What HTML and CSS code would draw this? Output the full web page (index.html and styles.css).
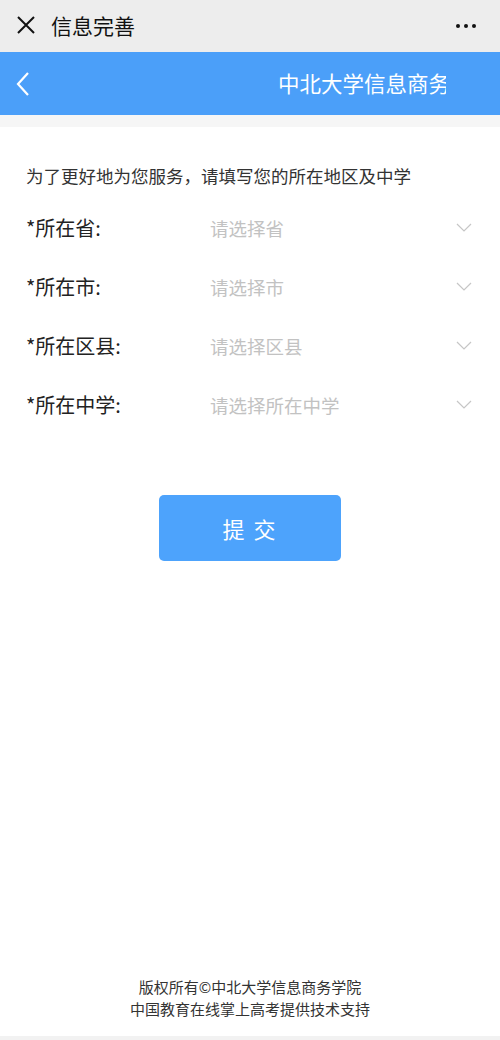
FILE: index.html
```html
<!DOCTYPE html>
<html lang="zh-CN">
<head>
    <meta charset="UTF-8">
    <meta name="viewport" content="width=device-width, initial-scale=1.0">
    <title>信息完善</title>
    <link rel="stylesheet" href="styles.css">
</head>
<body>
    <div class="page">
        <div class="topbar">
            <svg class="close" width="20" height="20" viewBox="0 0 20 20">
                <path d="M2 2 L18 18 M18 2 L2 18" stroke="#111" stroke-width="2" fill="none"/>
            </svg>
            <span class="topbar-title">信息完善</span>
            <span class="more"><i></i><i></i><i></i></span>
        </div>

        <div class="navbar">
            <svg class="back" width="16" height="26" viewBox="0 0 16 26">
                <path d="M13 2 L3 13 L13 24" stroke="#fff" stroke-width="2.2" fill="none"/>
            </svg>
            <div class="nav-title">中北大学信息商务学院</div>
        </div>
        <div class="strip"></div>

        <div class="form">
            <p class="intro">为了更好地为您服务，请填写您的所在地区及中学</p>

            <div class="row">
                <span class="label">*所在省:</span>
                <span class="placeholder">请选择省</span>
                <svg class="arrow" width="16" height="9" viewBox="0 0 16 9"><path d="M1 1 L8 8 L15 1" stroke="#c6c6c6" stroke-width="1.2" fill="none"/></svg>
            </div>
            <div class="row">
                <span class="label">*所在市:</span>
                <span class="placeholder">请选择市</span>
                <svg class="arrow" width="16" height="9" viewBox="0 0 16 9"><path d="M1 1 L8 8 L15 1" stroke="#c6c6c6" stroke-width="1.2" fill="none"/></svg>
            </div>
            <div class="row">
                <span class="label">*所在区县:</span>
                <span class="placeholder">请选择区县</span>
                <svg class="arrow" width="16" height="9" viewBox="0 0 16 9"><path d="M1 1 L8 8 L15 1" stroke="#c6c6c6" stroke-width="1.2" fill="none"/></svg>
            </div>
            <div class="row">
                <span class="label">*所在中学:</span>
                <span class="placeholder">请选择所在中学</span>
                <svg class="arrow" width="16" height="9" viewBox="0 0 16 9"><path d="M1 1 L8 8 L15 1" stroke="#c6c6c6" stroke-width="1.2" fill="none"/></svg>
            </div>

            <button class="submit">提 交</button>
        </div>

        <div class="footer">
            <p>版权所有©中北大学信息商务学院</p>
            <p>中国教育在线掌上高考提供技术支持</p>
        </div>
        <div class="bottom-strip"></div>
    </div>
</body>
</html>
```

FILE: styles.css
```css
* {
    margin: 0;
    padding: 0;
    box-sizing: border-box;
    font-family: "Noto Sans CJK SC", "Noto Sans", sans-serif;
}

body {
    background-color: #ffffff;
}

.page {
    width: 500px;
    height: 1040px;
    display: flex;
    flex-direction: column;
}

.topbar {
    height: 52px;
    background-color: #ededed;
    display: flex;
    align-items: center;
    padding: 0 24px 0 16px;
}

.close {
    margin-top: -2px;
}

.topbar-title {
    margin-left: 15px;
    font-size: 21px;
    color: #111;
    margin-top: -3px;
}

.more {
    margin-left: auto;
    display: flex;
    gap: 4px;
}

.more i {
    width: 4px;
    height: 4px;
    border-radius: 50%;
    background-color: #111;
}

.navbar {
    height: 63px;
    background-color: #4b9ff9;
    display: flex;
    align-items: center;
    padding-left: 15px;
}

.nav-title {
    margin-left: 247px;
    width: 168px;
    overflow: hidden;
    white-space: nowrap;
    color: #fff;
    font-size: 21.5px;
    margin-top: -2px;
}

.strip {
    height: 12px;
    background-color: #f6f6f6;
}

.form {
    padding: 36px 26px 0;
    display: flex;
    flex-direction: column;
}

.intro {
    font-size: 17.5px;
    line-height: 26px;
    color: #333;
    margin-bottom: 9px;
}

.row {
    height: 59px;
    display: flex;
    align-items: center;
}

.label {
    width: 184px;
    font-size: 20px;
    color: #222;
}

.placeholder {
    font-size: 18.5px;
    color: #c2c2c2;
}

.arrow {
    margin-left: auto;
    margin-right: 2px;
}

.submit {
    align-self: center;
    margin-top: 61px;
    width: 182px;
    height: 66px;
    border: none;
    border-radius: 5px;
    background-color: #4da3fc;
    color: #fff;
    font-size: 22px;
    letter-spacing: 2px;
}

.footer {
    margin-top: auto;
    margin-bottom: 16px;
    text-align: center;
    font-size: 15px;
    line-height: 22px;
    color: #333;
}

.bottom-strip {
    height: 4px;
    background-color: #f2f2f2;
}
```
